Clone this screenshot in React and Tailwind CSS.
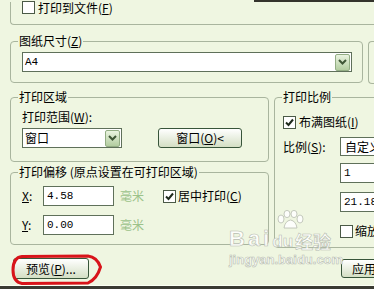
import { Fragment } from "react";

const line = "border-[#a9b59e]";

// mnemonic letter in parens, underlined like a win32 label
const Mn = ({ k }) => (
  <span>
    (<u>{k}</u>)
  </span>
);

const Check = ({ checked = false, className = "" }) => (
  <span className={`flex h-[13px] w-[13px] shrink-0 items-center justify-center border border-[#4a5a46] bg-white ${className}`}>
    {checked && (
      <svg width="9" height="9" viewBox="0 0 9 9">
        <path d="M1 4.5 L3.5 7 L8 1.5" fill="none" stroke="#1e2a1c" strokeWidth="2" />
      </svg>
    )}
  </span>
);

const DropBtn = () => (
  <span className="mr-[1px] flex h-[17px] w-[15px] shrink-0 items-center justify-center rounded-[2px] border border-[#93ad84] bg-linear-to-b from-[#eaf4e0] to-[#b3cda0]">
    <svg width="9" height="6" viewBox="0 0 9 6">
      <path d="M1 1 L4.5 4.5 L8 1" fill="none" stroke="#3f5636" strokeWidth="2" />
    </svg>
  </span>
);

const Combo = ({ className = "", mono = false, children, noBtn = false }) => (
  <div className={`flex shrink-0 items-center border border-[#5f705a] bg-white ${className}`}>
    <span
      className={`flex-1 whitespace-nowrap pl-[2px] ${
        mono ? "font-['Liberation_Mono',monospace] text-[11px]" : ""
      }`}
    >
      {children}
    </span>
    {!noBtn && <DropBtn />}
  </div>
);

const Field = ({ className = "", children }) => (
  <div
    className={`flex h-[20px] shrink-0 items-center border border-[#5f705a] bg-white pl-[3px] font-['Liberation_Mono',monospace] text-[11px] ${className}`}
  >
    {children}
  </div>
);

const Btn = ({ className = "", children }) => (
  <div
    className={`flex shrink-0 items-center justify-center whitespace-nowrap rounded-[3px] border border-[#38553a] bg-linear-to-b from-white to-[#d4dfc4] ${className}`}
  >
    {children}
  </div>
);

const Group = ({ title, className = "", bodyClass = "", children }) => (
  <fieldset className={`shrink-0 rounded-[4px] border ${line} ${className}`}>
    <legend className="ml-[7px] px-[1px] text-[12px] leading-[14px]">{title}</legend>
    <div className={bodyClass}>{children}</div>
  </fieldset>
);

export default function App() {
  return (
    <div className="relative flex h-[289px] w-[374px] flex-col overflow-hidden bg-[#eff6e1] font-['Noto_Sans_CJK_SC','Noto_Sans',sans-serif] text-[12px] leading-[14px] text-black">
      <div className="ml-[254px] h-[2px] shrink-0 bg-[#34342c]" />

      {/* tail of the group above, cut off by the screenshot */}
      <div className={`ml-[10px] mr-[-20px] h-[23px] shrink-0 rounded-bl-[4px] border-b border-l ${line}`}>
        <div className="-mt-[1px] flex items-center pl-[11px]">
          <Check className="-mt-[2px]" />
          <span className="ml-[3px]">
            打印到文件<Mn k="F" />
          </span>
        </div>
      </div>

      <div className="mt-[9px] flex shrink-0 items-start">
        <Group title={<Fragment>图纸尺寸<Mn k="Z" /></Fragment>} className="ml-[10px] w-[353px]" bodyClass="pl-[11px] pt-[4px] pb-[10px]">
          <Combo className="h-[20px] w-[330px]" mono>
            A4
          </Combo>
        </Group>
        <div className={`ml-[5px] mt-[7px] h-[43px] w-[20px] shrink-0 rounded-l-[4px] border-b border-l border-t ${line}`} />
      </div>

      <div className="ml-[10px] mt-[6px] flex shrink-0 items-start gap-[5px]">
        <div className="flex w-[259px] shrink-0 flex-col gap-[3px]">
          <Group title="打印区域" bodyClass="pl-[11px] pt-[6px] pb-[13px]">
            <div>
              打印范围<Mn k="W" />:
            </div>
            <div className="mt-[4px] flex items-center">
              <Combo className="h-[20px] w-[100px]">窗口</Combo>
              <Btn className="ml-[36px] h-[20px] w-[84px]">
                窗口<Mn k="O" />&lt;
              </Btn>
            </div>
          </Group>

          <Group title="打印偏移 (原点设置在可打印区域)" bodyClass="pl-[11px] pt-[7px] pb-[9px]">
            <div className="flex items-center">
              <span className="w-[21px]">
                <u>X</u>:
              </span>
              <Field className="w-[71px]">4.58</Field>
              <span className="ml-[6px] text-[#9cc28a]">毫米</span>
              <span className="ml-[19px]">
                <Check checked />
              </span>
              <span className="ml-[2px]">
                居中打印<Mn k="C" />
              </span>
            </div>
            <div className="mt-[9px] flex items-center">
              <span className="w-[21px]">
                <u>Y</u>:
              </span>
              <Field className="w-[71px]">0.00</Field>
              <span className="ml-[6px] text-[#9cc28a]">毫米</span>
            </div>
          </Group>
        </div>

        <Group title="打印比例" className="w-[130px]" bodyClass="pl-[8px] pt-[11px] pb-[9px]">
          <div className="flex h-[14px] items-center">
            <Check checked />
            <span className="ml-[3px] whitespace-nowrap">
              布满图纸<Mn k="I" />
            </span>
          </div>
          <div className="mt-[8px] flex items-center">
            <span className="w-[57px] shrink-0 whitespace-nowrap">
              比例<Mn k="S" />:
            </span>
            <Combo className="h-[19px] w-[70px]" noBtn>
              <span className="pl-[2px]">自定义</span>
            </Combo>
          </div>
          <Field className="ml-[57px] mt-[7px] w-[70px]">1</Field>
          <Field className="ml-[57px] mt-[9px] w-[70px]">21.18</Field>
          <div className="ml-[57px] mt-[12px] flex h-[14px] items-center">
            <Check />
            <span className="ml-[2px] whitespace-nowrap">缩放线宽</span>
          </div>
        </Group>
      </div>

      <div className="ml-[13px] mt-[10px] flex shrink-0 items-start">
        <Btn className="h-[21px] w-[76px]">
          预览<Mn k="P" />...
        </Btn>
        <Btn className="ml-[252px] mt-[1px] h-[19px] w-[60px] justify-start pl-[10px]">应用</Btn>
      </div>

      <div className="mt-auto h-[1px] shrink-0 bg-[#fbfff2]" />
      <div className="h-[3px] shrink-0 bg-[#3a3b33]" />

      {/* red hand-drawn mark around the preview button */}
      <svg className="pointer-events-none absolute left-0 top-0" width="374" height="289">
        <path
          d="M22 256.5 L88 256 Q97 257 100.5 267 Q97 279 88 283 L22 283.5 Q13 282 13 270 Q13 257.5 22 256.5 Z"
          fill="none"
          stroke="#d8141a"
          strokeWidth="3"
        />
      </svg>

      {/* site watermark */}
      <div className="pointer-events-none absolute left-[229px] top-[210px] flex flex-col text-white/85 [-webkit-text-stroke:0.6px_#b7bdb0]">
        <svg className="ml-[46px]" width="30" height="20" viewBox="0 0 30 20">
          <g fill="#ffffff" fillOpacity="0.85" stroke="#b7bdb0" strokeWidth="0.8">
            <ellipse cx="6" cy="9" rx="3" ry="4" />
            <ellipse cx="12" cy="4" rx="3" ry="3.6" />
            <ellipse cx="19" cy="4" rx="3" ry="3.6" />
            <ellipse cx="25" cy="9" rx="3" ry="4" />
            <path d="M9 18 Q10 11 15.5 10 Q21 11 22 18 Z" />
          </g>
        </svg>
        <div className="-mt-[2px] flex items-end font-['Liberation_Sans',sans-serif] font-bold leading-none">
          <span className="text-[22px] tracking-[3px]">Bai</span>
          <span className="text-[17px]">du</span>
          <span className="ml-[2px] font-['Noto_Sans_CJK_SC',sans-serif] text-[18px]">经验</span>
        </div>
        <div className="mt-[3px] font-['Liberation_Sans',sans-serif] text-[13px] font-bold leading-none">
          jingyan.baidu.com
        </div>
      </div>
    </div>
  );
}
